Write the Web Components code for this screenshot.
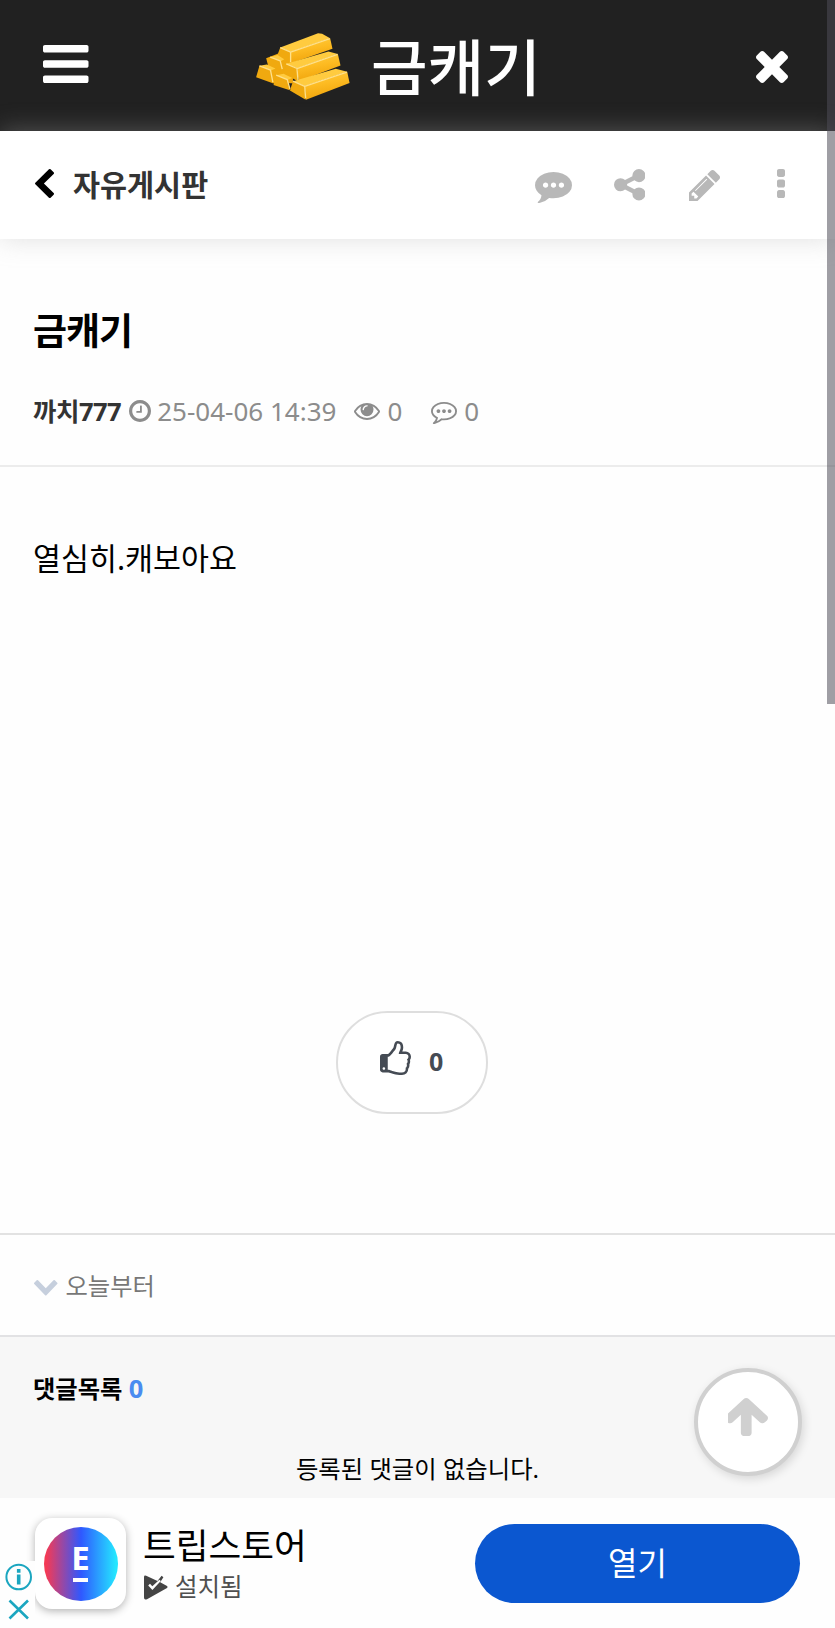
<!DOCTYPE html>
<html lang="ko">
<head>
<meta charset="utf-8">
<title>금캐기</title>
<style>
    body{
        margin: 0;
        background: #fefefe;
        color: #000;
        font-family: "Noto Sans", "Noto Sans CJK KR", sans-serif;
    }
</style>
</head>
<body>
<board-app></board-app>

<script>
// viewBox + path for every glyph used on the page
const ICONS = {
    bars: ['128 256 1536 1280', 'M1664 1344v128q0 26-19 45t-45 19h-1408q-26 0-45-19t-19-45v-128q0-26 19-45t45-19h1408q26 0 45 19t19 45zm0-512v128q0 26-19 45t-45 19h-1408q-26 0-45-19t-19-45v-128q0-26 19-45t45-19h1408q26 0 45 19t19 45zm0-512v128q0 26-19 45t-45 19h-1408q-26 0-45-19t-19-45v-128q0-26 19-45t45-19h1408q26 0 45 19t19 45z'],
    times: ['302 366 1188 1188', 'M1490 1322q0 40-28 68l-136 136q-28 28-68 28t-68-28l-294-294-294 294q-28 28-68 28t-68-28l-136-136q-28-28-28-68t28-68l294-294-294-294q-28-28-28-68t28-68l136-136q28-28 68-28t68 28l294 294 294-294q28-28 68-28t68 28l136 136q28 28 28 68t-28 68l-294 294 294 294q28 28 28 68z'],
    back: ['410 26 1036 1612', 'M1427 301l-531 531 531 531q19 19 19 45t-19 45l-166 166q-19 19-45 19t-45-19l-742-742q-19-19-19-45t19-45l742-742q19-19 45-19t45 19l166 166q19 19 19 45t-19 45z'],
    comment: ['0 256 1792 1506', 'M640 896q0-53-37.5-90.5t-90.5-37.5-90.5 37.5-37.5 90.5 37.5 90.5 90.5 37.5 90.5-37.5 37.5-90.5zm384 0q0-53-37.5-90.5t-90.5-37.5-90.5 37.5-37.5 90.5 37.5 90.5 90.5 37.5 90.5-37.5 37.5-90.5zm384 0q0-53-37.5-90.5t-90.5-37.5-90.5 37.5-37.5 90.5 37.5 90.5 90.5 37.5 90.5-37.5 37.5-90.5zm384 0q0 174-120 321.5t-326 233-450 85.5q-110 0-211-18-173 173-435 229-52 10-86 13-12 1-22-6t-13-18q-4-15 20-37 5-5 23.5-21.5t25.5-23.5 23.5-25.5 24-31.5 20.5-37 20-48 14.5-57.5 12.5-72.5q-146-90-229.5-216.5t-83.5-269.5q0-174 120-321.5t326-233 450-85.5 450 85.5 326 233 120 321.5z'],
    commentO: ['0 256 1792 1536', 'M640 896q0 53-37.5 90.5t-90.5 37.5-90.5-37.5-37.5-90.5 37.5-90.5 90.5-37.5 90.5 37.5 37.5 90.5zm384 0q0 53-37.5 90.5t-90.5 37.5-90.5-37.5-37.5-90.5 37.5-90.5 90.5-37.5 90.5 37.5 37.5 90.5zm384 0q0 53-37.5 90.5t-90.5 37.5-90.5-37.5-37.5-90.5 37.5-90.5 90.5-37.5 90.5 37.5 37.5 90.5zM896 384q-204 0-381.5 69.5t-282 187.5-104.5 255q0 112 71.5 213.5t201.5 175.5l87 50-27 96q-24 91-70 172 152-63 275-171l43-38 57 6q69 8 130 8 204 0 381.5-69.5t282-187.5 104.5-255-104.5-255-282-187.5-381.5-69.5zm896 512q0 174-120 321.5t-326 233-450 85.5q-70 0-145-8-198 175-460 242-49 14-114 22h-5q-15 0-27-10.5t-16-27.5v-1q-3-4-.5-12t2-10 4.5-9.5l6-9 7-8.5 8-9q7-8 31-34.5t34.5-38 31-39.5 32.5-51 27-59 26-76q-157-89-247.5-220t-90.5-281q0-174 120-321.5t326-233 450-85.5 450 85.5 326 233 120 321.5z'],
    share: ['128 128 1536 1536', 'M1344 1024q133 0 226.5 93.5t93.5 226.5-93.5 226.5-226.5 93.5-226.5-93.5-93.5-226.5q0-12 2-34l-360-180q-92 86-218 86-133 0-226.5-93.5t-93.5-226.5 93.5-226.5 226.5-93.5q126 0 218 86l360-180q-2-22-2-34 0-133 93.5-226.5t226.5-93.5 226.5 93.5 93.5 226.5-93.5 226.5-226.5 93.5q-126 0-218-86l-360 180q2 22 2 34t-2 34l360 180q92-86 218-86z'],
    pencil: ['128 149 1515 1515', 'M491 1536l91-91-235-235-91 91v107h128v128h107zm523-928q0-22-22-22-10 0-17 7l-542 542q-7 7-7 17 0 22 22 22 10 0 17-7l542-542q7-7 7-17zm-54-192l416 416-832 832h-416v-416zm683 96q0 53-37 90l-166 166-416-416 166-165q36-38 90-38 53 0 91 38l235 234q37 39 37 91z'],
    dots: ['704 128 384 1408', 'M1088 1248v192q0 40-28 68t-68 28h-192q-40 0-68-28t-28-68v-192q0-40 28-68t68-28h192q40 0 68 28t28 68zm0-512v192q0 40-28 68t-68 28h-192q-40 0-68-28t-28-68v-192q0-40 28-68t68-28h192q40 0 68 28t28 68zm0-512v192q0 40-28 68t-68 28h-192q-40 0-68-28t-28-68v-192q0-40 28-68t68-28h192q40 0 68 28t28 68z'],
    clock: ['128 128 1536 1536', 'M1024 544v448q0 14-9 23t-23 9h-320q-14 0-23-9t-9-23v-64q0-14 9-23t23-9h224v-352q0-14 9-23t23-9h64q14 0 23 9t9 23zm416 352q0-148-73-273t-198-198-273-73-273 73-198 198-73 273 73 273 198 198 273 73 273-73 198-198 73-273zm224 0q0 209-103 385.5t-279.5 279.5-385.5 103-385.5-103-279.5-279.5-103-385.5 103-385.5 279.5-279.5 385.5-103 385.5 103 279.5 279.5 103 385.5z'],
    eye: ['0 384 1792 1152', 'M1664 960q-152-236-381-353 61 104 61 225 0 185-131.5 316.5t-316.5 131.5-316.5-131.5-131.5-316.5q0-121 61-225-229 117-381 353 133 205 333.5 326.5t434.5 121.5 434.5-121.5 333.5-326.5zm-720-384q0-20-14-34t-34-14q-125 0-214.5 89.5t-89.5 214.5q0 20 14 34t34 14 34-14 14-34q0-86 61-147t147-61q20 0 34-14t14-34zm848 384q0 34-20 69-140 230-376.5 368.5t-499.5 138.5-499.5-139-376.5-368q-20-35-20-69t20-69q140-229 376.5-368t499.5-139 499.5 139 376.5 368q20 35 20 69z'],
    thumb: ['128 0 1536 1664', 'M384 1344q0-26-19-45t-45-19-45 19-19 45 19 45 45 19 45-19 19-45zm1152-576q0-51-39-89.5t-89-38.5h-352q0-58 48-159.5t48-160.5q0-98-32-145t-128-47q-26 26-38 85t-30.5 125.5-59.5 109.5q-22 23-77 91-4 5-23 30t-31.5 41-34.5 42.5-40 44-38.5 35.5-40 27-35.5 9h-32v640h32q13 0 31.5 3t33 6.5 38 11 35 11.5 35.5 12.5 29 10.5q211 73 342 73h121q192 0 192-167 0-26-5-56 30-16 47.5-52.5t17.5-73.5-18-69q53-50 53-119 0-25-10-55.5t-25-47.5q32-1 53.5-47t21.5-81zm128-1q0 89-49 163 9 33 9 69 0 77-38 144 3 21 3 43 0 101-60 178 1 139-85 219.5t-227 80.5h-129q-96 0-189.5-22.5t-216.5-65.5q-116-40-138-40h-288q-53 0-90.5-37.5t-37.5-90.5v-640q0-53 37.5-90.5t90.5-37.5h274q36-24 137-155 58-75 107-128 24-25 35.5-85.5t30.5-126.5 62-108q39-37 90-37 84 0 151 32.5t102 101.5 35 186q0 93-48 192h176q104 0 180 76t76 179z'],
    down: ['90 533 1612 1035', 'M1683 808l-742 741q-19 19-45 19t-45-19l-742-741q-19-19-19-45.5t19-45.5l166-165q19-19 45-19t45 19l531 531 531-531q19-19 45-19t45 19l166 165q19 19 19 45.5t-19 45.5z'],
    up: ['179 192 1432 1472', 'M1611 971q0 51-37 90l-75 75q-38 38-91 38-54 0-90-38l-294-293v704q0 52-37.5 84.5t-90.5 32.5h-128q-53 0-90.5-32.5t-37.5-84.5v-704l-294 293q-36 38-90 38t-90-38l-75-75q-38-38-38-90 0-53 38-91l651-651q35-37 90-37 54 0 91 37l651 651q37 39 37 91z'],
    play: ['0 0 24 25.500', 'M2.200.8L13.500 6 17.600.8 19.400 2.300 16.200 7.300 23 11.200Q24 12.200 23 13.300L3 24.700Q0 26 0 23V2Q0 0 2.200.8zM4.200 10.800L8.400 15.200 16.800 6.200 15.400 4.800 8.300 11.600 6 9z']
};

class BoardElement extends HTMLElement
{
    constructor(){
        super();
        this.shadow = this.attachShadow({mode: 'open'});
    }

    connectedCallback(){
        this.shadow.innerHTML = `<style>:host{ display: block; box-sizing: border-box; }${this.css}</style>${this.html}`;
    }

    get css(){ return '' }
    get html(){ return '<slot></slot>' }
}


customElements.define('b-icon', class BIcon extends BoardElement {

    get css(){
        return (
            `:host{
                flex: none;
                width: ${this.getAttribute('w')}px;
                height: ${this.getAttribute('h')}px;
            }
            svg{ display: block; width: 100%; height: 100%; }`
        )
    }

    get html(){
        const [box, d] = ICONS[this.getAttribute('name')];
        return `<svg viewBox="${box}" preserveAspectRatio="none" fill="currentColor" fill-rule="${this.getAttribute('rule') || 'nonzero'}"><path d="${d}"/></svg>`
    }
})

customElements.define('gold-logo', class GoldLogo extends BoardElement {

    get css(){
        return (
            `:host{ width: 94px; height: 67px; }
            svg{ display: block; }
            .top{ fill: #ffcb3f; }
            .side{ fill: url(#side); }
            .end{ fill: #f0a90f; }
            .edge{ fill: none; stroke: #ffe08a; stroke-width: 4; stroke-linejoin: round; }`
        )
    }

    // top row first, so the nearer bars cover the ones behind
    get html(){
        return (
            `<svg width="94" height="67" viewBox="20 40 280 200">
                <defs><linearGradient id="side" x1="0" y1="0" x2=".3" y2="1">
                    <stop offset="0" stop-color="#ffce45"/>
                    <stop offset=".5" stop-color="#fdbb22"/>
                    <stop offset="1" stop-color="#f0a40b"/>
                </linearGradient></defs>
                <path class="end" d="M50 115L90 100 130 120 130 190 70 190z"/>

                <path class="top" d="M92 83L205 41 217 42 241 56 123 97z"/>
                <path class="side" d="M123 97L241 56 248 87 124 130z"/>
                <path class="end" d="M83 108L92 83 123 97 124 130z"/>
                <path class="edge" d="M92 84L123 97 123 127M123 97L240 57"/>

                <path class="top" d="M62 112L84 106 104 118 94 124z"/>
                <path class="end" d="M54 138L62 112 92 123 97 152z"/>
                <path class="edge" d="M62 112L92 123 98 148"/>

                <path class="top" d="M110 132L236 95 264 103 142 146z"/>
                <path class="side" d="M142 146L264 103 272 137 147 184z"/>
                <path class="end" d="M100 160L110 132 142 146 145 184z"/>
                <path class="edge" d="M110 132L142 146 145 180M142 146L263 104"/>

                <path class="top" d="M30 138L52 134 78 146 64 152z"/>
                <path class="end" d="M20 172L30 138 63 151 72 191z"/>
                <path class="edge" d="M30 138L63 151 70 187"/>

                <path class="top" d="M80 166L102 162 128 174 114 180z"/>
                <path class="end" d="M72 195L80 166 113 179 121 211z"/>
                <path class="edge" d="M80 166L113 179 121 207"/>

                <path class="top" d="M130 184L258 147 292 156 165 199z"/>
                <path class="side" d="M165 199L292 156 299 189 169 239z"/>
                <path class="end" d="M121 212L130 184 165 199 168 239z"/>
                <path class="edge" d="M130 184L165 199 168 235M165 199L291 157"/>
            </svg>`
        )
    }
})

customElements.define('site-header', class SiteHeader extends BoardElement {

    get css(){
        return (
            `:host{
                height: 131px;
                background: #212121;
                color: #fff;
            }
            header{
                display: flex;
                align-items: flex-start;
                padding: 0 47px 0 43px;
            }
            .menu{ margin-top: 45px; }
            .close{ margin: 51px 0 0 auto; }
            gold-logo{ margin: 33px 0 0 167.5px; }
            .name{
                margin: 22px 0 0 21px;
                font-size: 61.5px;
                line-height: 90px;
                font-weight: 500;
            }`
        )
    }

    get html(){
        return (
            `<header>
                <b-icon class="menu" name="bars" w="45.5" h="38"></b-icon>
                <gold-logo></gold-logo>
                <span class="name"><slot></slot></span>
                <b-icon class="close" name="times" w="32" h="32"></b-icon>
            </header>`
        )
    }
})

customElements.define('board-bar', class BoardBar extends BoardElement {

    get css(){
        return (
            `:host{
                height: 108px;
                background: #fff;
                box-shadow: 0 0 24px rgba(177,177,177,.38);
                position: relative;
            }
            nav{
                display: flex;
                align-items: flex-start;
                height: 100%;
                padding: 0 50px 0 35px;
                box-sizing: border-box;
                color: #b8b8b8;
            }
            .back{ color: #000; margin: 38px 19px 0 0; }
            .label{
                margin: 32px auto 0 0;
                color: #333;
                font-size: 29.4px;
                font-weight: 700;
                line-height: 44px;
            }`
        )
    }

    get html(){
        return (
            `<nav>
                <b-icon class="back" name="back" w="19" h="29"></b-icon>
                <span class="label"><slot></slot></span>
                <b-icon name="comment" w="37" h="31" style="margin:41px 42px 0 0"></b-icon>
                <b-icon name="share" w="31.5" h="31.5" style="margin:38px 44px 0 0"></b-icon>
                <b-icon name="pencil" w="31" h="31" style="margin:39px 57px 0 0"></b-icon>
                <b-icon name="dots" w="8" h="29" style="margin-top:38px"></b-icon>
            </nav>`
        )
    }
})

customElements.define('post-head', class PostHead extends BoardElement {

    get css(){
        return (
            `:host{
                height: 228px;
                padding: 62px 33px 0;
                border-bottom: 2px solid #ececec;
            }
            h1{
                margin: 0;
                font-size: 37px;
                line-height: 60px;
                letter-spacing: -1px;
            }
            .meta{
                display: flex;
                align-items: center;
                height: 40px;
                margin-top: 30px;
                font-size: 26px;
                line-height: 40px;
                color: #8c8c8c;
            }
            .meta b{ color: #333; font-size: 25.5px; letter-spacing: -.5px; margin-right: 7.5px; }
            .date{ margin: 0 18px 0 6.5px; letter-spacing: 0; }
            .views{ margin: 0 29px 0 7px; }
            .replies{ margin-left: 7px; }`
        )
    }

    get html(){
        return (
            `<h1><slot></slot></h1>
            <div class="meta">
                <b>${this.dataset.author}</b>
                <b-icon name="clock" w="22" h="22"></b-icon>
                <span class="date">${this.dataset.date}</span>
                <b-icon name="eye" w="26" h="17"></b-icon>
                <span class="views">0</span>
                <b-icon name="commentO" w="26" h="22" style="margin-top:3px"></b-icon>
                <span class="replies">0</span>
            </div>`
        )
    }
})

customElements.define('post-body', class PostBody extends BoardElement {

    get css(){
        return (
            `:host{
                display: flex;
                flex-direction: column;
                height: 768px;
                padding: 68px 33px 0;
                border-bottom: 2px solid #e2e2e2;
            }
            p{
                margin: 0;
                font-size: 30.4px;
                line-height: 48px;
            }
            .good{
                display: flex;
                align-items: center;
                box-sizing: border-box;
                width: 152px;
                height: 103px;
                margin: 428px 0 0 303px;
                padding-left: 42px;
                border: 2px solid #dedede;
                border-radius: 52px;
                background: #fff;
                color: #454b54;
                font-size: 25px;
                font-weight: 700;
            }
            .good b-icon{ margin: -10px 18px 0 0; }
            .good span{ margin-top: -3px; }`
        )
    }

    get html(){
        return (
            `<p><slot></slot></p>
            <div class="good"><b-icon name="thumb" w="31" h="34"></b-icon><span>0</span></div>`
        )
    }
})

customElements.define('post-sign', class PostSign extends BoardElement {

    get css(){
        return (
            `:host{
                display: flex;
                height: 102px;
                padding-left: 34px;
                border-bottom: 2px solid #e2e2e4;
                color: #777;
                font-size: 24.3px;
                line-height: 40px;
            }
            b-icon{ color: #c6cfdd; margin: 45px 8px 0 0; }
            span{ margin-top: 31px; }`
        )
    }

    get html(){
        return `<b-icon name="down" w="23.5" h="15.5"></b-icon><span><slot></slot></span>`
    }
})

customElements.define('comment-list', class CommentList extends BoardElement {

    get css(){
        return (
            `:host{
                height: 161px;
                padding: 31px 33px 0;
                background: #f7f7f7;
            }
            h2{
                margin: 0;
                font-size: 24.3px;
                line-height: 40px;
            }
            h2 em{ font-style: normal; font-size: 25.500px; color: #4a8cf0; }
            p{
                margin: 40px 0 0;
                text-align: center;
                font-size: 24.35px;
                line-height: 40px;
            }`
        )
    }

    get html(){
        return (
            `<h2>댓글목록 <em>0</em></h2>
            <p><slot></slot></p>`
        )
    }
})

customElements.define('go-top', class GoTop extends BoardElement {

    get css(){
        return (
            `:host{
                position: absolute;
                left: 694px;
                top: 1367.5px;
                width: 108px;
                height: 108px;
                padding: 26px 0 0 30px;
                border: 4px solid #d0d0d0;
                border-radius: 50%;
                background: #fff;
                color: #d0d0d0;
                box-shadow: 2px 3px 10px rgba(0,0,0,.13);
            }`
        )
    }

    get html(){
        return `<b-icon name="up" w="40" h="38"></b-icon>`
    }
})

customElements.define('ad-banner', class AdBanner extends BoardElement {

    get css(){
        return (
            `:host{
                display: flex;
                align-items: flex-start;
                position: relative;
                height: 130px;
                padding-left: 35px;
                overflow: hidden;
            }
            .app{
                display: flex;
                align-items: center;
                justify-content: center;
                width: 91px;
                height: 91px;
                margin-top: 20px;
                border-radius: 17px;
                background: #fff;
                box-shadow: 0 2px 9px rgba(0,0,0,.3);
            }
            .disc{
                display: flex;
                flex-direction: column;
                align-items: center;
                width: 74px;
                height: 74px;
                border-radius: 50%;
                background: linear-gradient(90deg, #f43a55 3%, #2f58ff 50%, #24e6ff 97%);
                color: #fff;
            }
            .disc b{
                margin-top: 14px;
                font: 700 33px/33px "Noto Sans", sans-serif;
            }
            .disc i{ width: 15px; height: 4.5px; margin-top: 4px; background: #fff; }
            .text{ margin: 21px auto 0 17px; }
            .title{ display: block; font-size: 35.6px; line-height: 52px; }
            .state{
                display: flex;
                align-items: center;
                height: 36px;
                margin-top: -2px;
                color: #505050;
                font-size: 24.5px;
                line-height: 36px;
            }
            .state b-icon{ margin: 0 7px 0 1px; color: #444; }
            .open{
                width: 325px;
                height: 79px;
                margin: 26px 35px 0 0;
                border-radius: 40px;
                background: #0b57d0;
                color: #fff;
                font-size: 32px;
                line-height: 78px;
                text-align: center;
            }
            .info{
                position: absolute;
                left: 0;
                bottom: 0;
                width: 35px;
                height: 67px;
                background: #fefefe;
            }`
        )
    }

    get html(){
        return (
            `<div class="app"><div class="disc"><b>E</b><i></i></div></div>
            <div class="text">
                <span class="title">트립스토어</span>
                <span class="state"><b-icon name="play" rule="evenodd" w="24" h="25"></b-icon>설치됨</span>
            </div>
            <div class="open">열기</div>
            <svg class="info" viewBox="0 0 35 67" fill="none" stroke="#1ba6c0" stroke-width="2">
                <circle cx="18.7" cy="16" r="12.3"/>
                <path stroke-width="3.6" d="M18.7 13.5v10M18.7 8v3.8"/>
                <path stroke-width="2.6" d="M9.5 39.5l18.5 18M28 39.5l-18.5 18"/>
            </svg>`
        )
    }
})

customElements.define('scroll-thumb', class ScrollThumb extends BoardElement {

    get css(){
        return (
            `:host{
                position: absolute;
                right: 0;
                top: 0;
                width: 8px;
                height: 704px;
                background: rgba(77,75,86,.54);
            }`
        )
    }

    get html(){ return '' }
})

customElements.define('board-app', class BoardApp extends BoardElement {

    get css(){
        return (
            `:host{
                position: relative;
                width: 835px;
                height: 1628px;
                overflow: hidden;
            }`
        )
    }

    get html(){
        return (
            `<site-header>금캐기</site-header>
            <board-bar>자유게시판</board-bar>
            <post-head data-author="까치777" data-date="25-04-06 14:39">금캐기</post-head>
            <post-body>열심히.캐보아요</post-body>
            <post-sign>오늘부터</post-sign>
            <comment-list>등록된 댓글이 없습니다.</comment-list>
            <ad-banner></ad-banner>
            <go-top></go-top>
            <scroll-thumb></scroll-thumb>`
        )
    }
})
</script>
</body>
</html>
